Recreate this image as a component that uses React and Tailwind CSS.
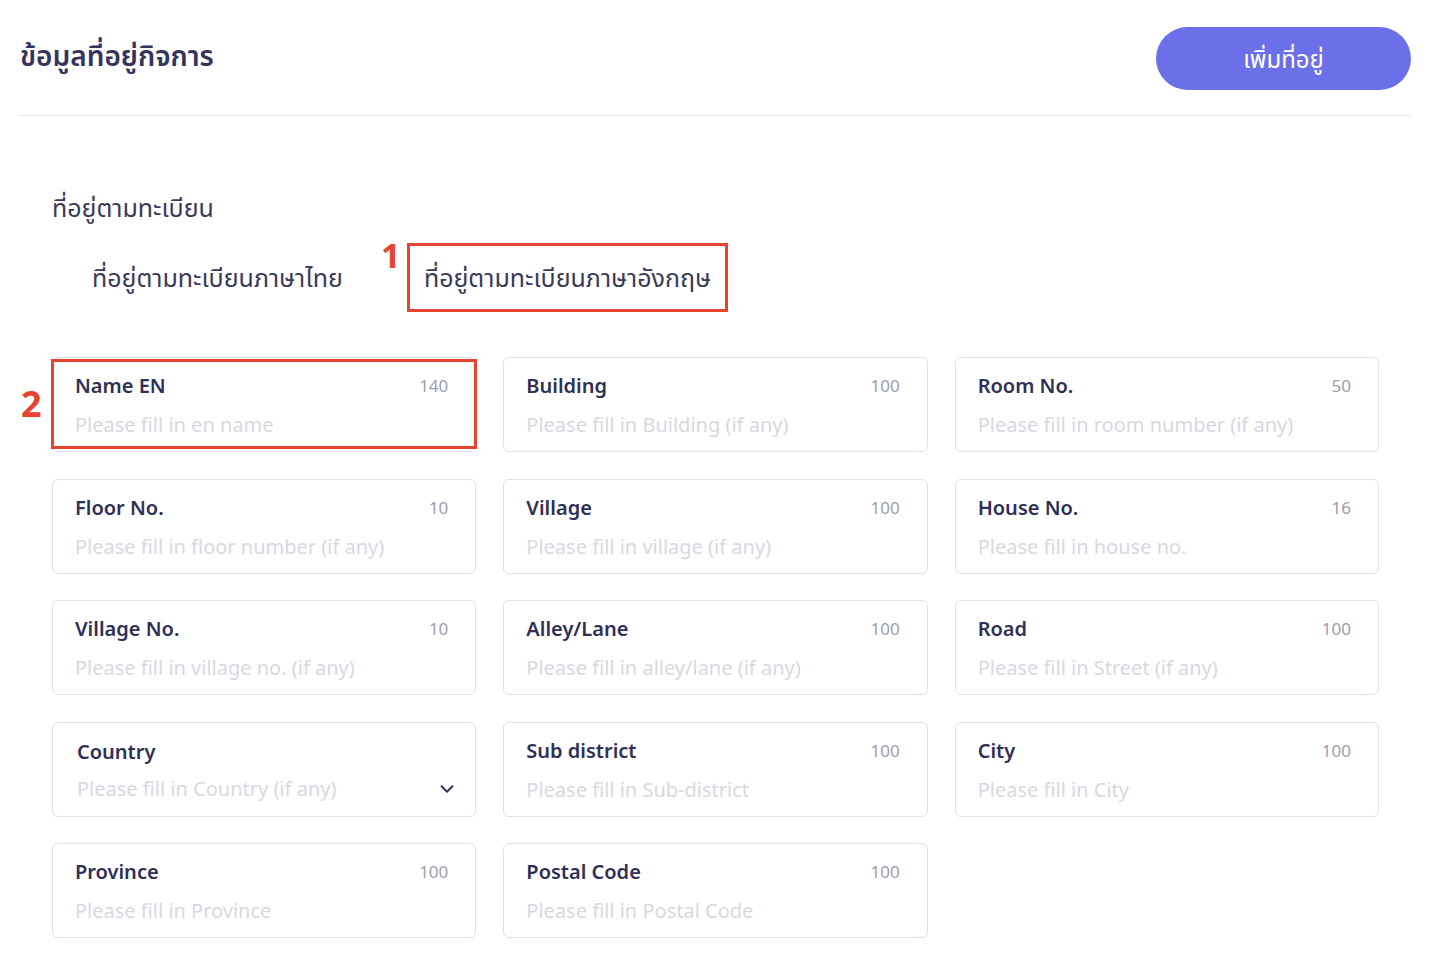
import { ChevronDown } from "lucide-react";

const fields = [
  { label: "Name EN", max: 140, placeholder: "Please fill in en name", marked: true },
  { label: "Building", max: 100, placeholder: "Please fill in Building (if any)" },
  { label: "Room No.", max: 50, placeholder: "Please fill in room number (if any)" },
  { label: "Floor No.", max: 10, placeholder: "Please fill in floor number (if any)" },
  { label: "Village", max: 100, placeholder: "Please fill in village (if any)" },
  { label: "House No.", max: 16, placeholder: "Please fill in house no." },
  { label: "Village No.", max: 10, placeholder: "Please fill in village no. (if any)" },
  { label: "Alley/Lane", max: 100, placeholder: "Please fill in alley/lane (if any)" },
  { label: "Road", max: 100, placeholder: "Please fill in Street (if any)" },
  { label: "Country", placeholder: "Please fill in Country (if any)", select: true },
  { label: "Sub district", max: 100, placeholder: "Please fill in Sub-district" },
  { label: "City", max: 100, placeholder: "Please fill in City" },
  { label: "Province", max: 100, placeholder: "Please fill in Province" },
  { label: "Postal Code", max: 100, placeholder: "Please fill in Postal Code" },
];

const FieldCard = ({ field }) => {
  if (field.select) {
    return (
      <div className="h-[95px] rounded-[6px] border border-[#dfdfe8] bg-white pl-[24px] pr-[17px] pt-[15px]">
        <p className="text-[20px] leading-[28px] font-semibold text-[#2f2f57]">{field.label}</p>
        <div className="mt-[11px] flex items-center justify-between">
          <span className="text-[20px] leading-[24px] text-[#d8d8e2]">{field.placeholder}</span>
          <ChevronDown className="w-[22px] h-[22px] text-[#2f2f57]" strokeWidth={2} />
        </div>
      </div>
    );
  }

  return (
    <div className="relative h-[95px] rounded-[6px] border border-[#dfdfe8] bg-white pl-[22px] pr-[27px] pt-[14px]">
      <div className="flex items-center justify-between">
        <p className="text-[20px] leading-[28px] font-semibold text-[#2f2f57]">{field.label}</p>
        <span className="text-[17px] text-[#9c9cb2]">{field.max}</span>
      </div>
      <p className="mt-[13px] text-[20px] leading-[24px] text-[#d8d8e2]">{field.placeholder}</p>
      {field.marked && (
        <>
          <div className="absolute left-[-2px] right-[-2px] top-[1px] bottom-[2px] border-[3px] border-[#e8432e] pointer-events-none" />
          <span className="absolute left-[-32px] top-[26px] text-[36px] leading-[40px] font-bold text-[#e8432e]">2</span>
        </>
      )}
    </div>
  );
};

const App = () => {
  return (
    <div
      className="min-h-[968px] w-full bg-white pl-[20px] pr-[29px]"
      style={{ fontFamily: '"Noto Sans", "Noto Sans Thai", "Open Sans", sans-serif' }}
    >
      <div className="flex items-center justify-between border-b border-[#e2e2ea] pt-[27px] pb-[25px]">
        <h1 className="-mt-[8px] text-[28px] font-semibold text-[#34345c]">ข้อมูลที่อยู่กิจการ</h1>
        <button className="h-[63px] w-[255px] rounded-full bg-[#6b70e8] text-[24px] text-white">
          เพิ่มที่อยู่
        </button>
      </div>

      <div className="px-[32px]">
        <h2 className="mt-[74px] text-[25px] leading-[34px] text-[#3a3a58]">ที่อยู่ตามทะเบียน</h2>

        <div className="mt-[19px] ml-[20px] flex items-start">
          <button className="h-[69px] px-[20px] text-[25px] text-[#3a3a58]">ที่อยู่ตามทะเบียนภาษาไทย</button>
          <div className="relative ml-[44px]">
            <span className="absolute left-[-26px] top-[-8px] text-[34px] leading-[40px] font-bold text-[#e8432e]">1</span>
            <button className="h-[69px] border-[3px] border-[#e8432e] px-[14px] text-[25px] text-[#3a3a58]">
              ที่อยู่ตามทะเบียนภาษาอังกฤษ
            </button>
          </div>
        </div>

        <div className="mt-[45px] grid grid-cols-3 gap-x-[27px] gap-y-[26.5px]">
          {fields.map((f) => (
            <FieldCard key={f.label} field={f} />
          ))}
        </div>
      </div>
    </div>
  );
};

export default App;
